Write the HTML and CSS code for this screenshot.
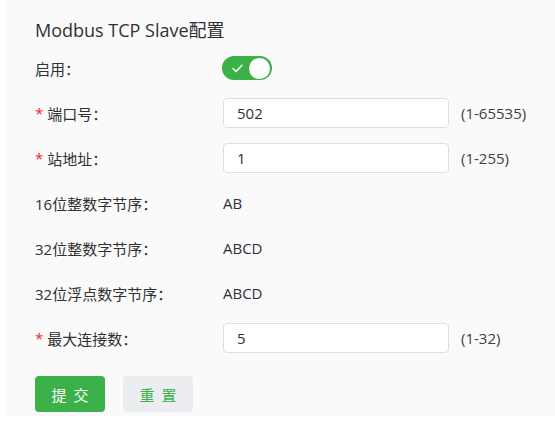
FILE: index.html
```html
<!DOCTYPE html>
<html lang="zh-CN">
<head>
<meta charset="utf-8">
<title>Modbus TCP Slave配置</title>
<link rel="stylesheet" href="styles.css">
</head>
<body>
<div class="card">
  <h2 class="title">Modbus TCP Slave配置</h2>
  <form class="form">
    <div class="row">
      <label class="label">启用：</label>
      <div class="control">
        <span class="switch">
          <svg class="check" width="11" height="9" viewBox="0 0 11 9"><path d="M1 4.5 L4 7.5 L10 1.2" fill="none" stroke="#fff" stroke-width="1.4" stroke-linecap="round" stroke-linejoin="round"/></svg>
          <span class="knob"></span>
        </span>
      </div>
    </div>
    <div class="row">
      <label class="label"><span class="req">*</span>端口号：</label>
      <div class="control"><input class="input" type="text" value="502"><span class="hint">(1-65535)</span></div>
    </div>
    <div class="row">
      <label class="label"><span class="req">*</span>站地址：</label>
      <div class="control"><input class="input" type="text" value="1"><span class="hint">(1-255)</span></div>
    </div>
    <div class="row">
      <label class="label">16位整数字节序：</label>
      <div class="control"><span class="value">AB</span></div>
    </div>
    <div class="row">
      <label class="label">32位整数字节序：</label>
      <div class="control"><span class="value">ABCD</span></div>
    </div>
    <div class="row">
      <label class="label">32位浮点数字节序：</label>
      <div class="control"><span class="value">ABCD</span></div>
    </div>
    <div class="row">
      <label class="label"><span class="req">*</span>最大连接数：</label>
      <div class="control"><input class="input" type="text" value="5"><span class="hint">(1-32)</span></div>
    </div>
    <div class="actions">
      <button type="button" class="btn btn-primary">提交</button>
      <button type="button" class="btn btn-default">重置</button>
    </div>
  </form>
</div>
</body>
</html>
```
FILE: styles.css
```css
html, body {
  margin: 0;
  padding: 0;
  background: #ffffff;
}
body {
  font-family: "Open Sans", "Noto Sans CJK SC", sans-serif;
  color: #303133;
}
.card {
  margin-left: 7px;
  height: 416px;
  box-sizing: border-box;
  background: #fafafa;
  padding: 18px 0 0 28px;
}
.title {
  margin: 0 0 11px 0;
  font-size: 18px;
  font-weight: 400;
  line-height: 24px;
  color: #303133;
}
.form {
  display: flex;
  flex-direction: column;
  gap: 15px;
}
.row {
  display: flex;
  align-items: center;
  height: 30px;
}
.label {
  width: 188px;
  font-size: 15px;
  color: #303133;
  display: flex;
  align-items: center;
}
.req {
  color: #f5222d;
  margin-right: 4px;
  font-size: 15px;
}
.control {
  display: flex;
  align-items: center;
  font-size: 15px;
}
.input {
  box-sizing: border-box;
  width: 226px;
  height: 30px;
  border: 1px solid #dcdfe6;
  border-radius: 4px;
  background: #ffffff;
  padding: 0 13px;
  font-family: "Open Sans", "Noto Sans CJK SC", sans-serif;
  font-size: 15px;
  color: #303133;
  outline: none;
}
.hint {
  margin-left: 12px;
  font-size: 15px;
  color: #404040;
}
.value {
  font-size: 15px;
  color: #303133;
}
.switch {
  position: relative;
  display: inline-block;
  width: 50px;
  height: 24px;
  border-radius: 12px;
  background: #3cb14a;
  margin-left: -1px;
}
.check {
  position: absolute;
  left: 10px;
  top: 8px;
}
.knob {
  position: absolute;
  right: 2px;
  top: 1.5px;
  width: 21px;
  height: 21px;
  border-radius: 50%;
  background: #ffffff;
}
.actions {
  display: flex;
  gap: 18px;
  margin-top: 8px;
}
.btn {
  width: 70px;
  height: 36px;
  border: none;
  border-radius: 4px;
  font-family: "Noto Sans CJK SC", sans-serif;
  font-size: 15px;
  letter-spacing: 7px;
  padding: 0 0 0 7px;
  cursor: pointer;
}
.btn-primary {
  background: #3cb14a;
  color: #ffffff;
}
.btn-default {
  background: #ebedf0;
  color: #3cb14a;
}
```
